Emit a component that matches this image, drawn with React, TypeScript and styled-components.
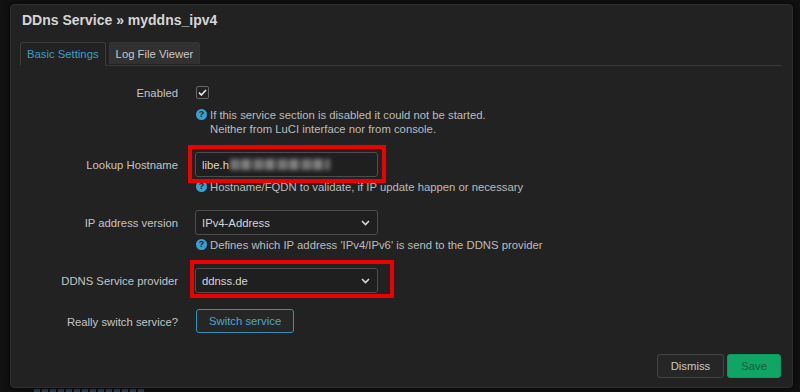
import styled, { createGlobalStyle } from 'styled-components';

const GlobalStyle = createGlobalStyle`
    html, body {
        margin: 0;
        padding: 0;
        background: #111111;
        font-family: 'Liberation Sans', Arial, sans-serif;
    }
`;

const Page = styled.div`
    width: 800px;
    height: 392px;
    padding: 4px 0 0 10px;
    box-sizing: border-box;
    overflow: hidden;
    position: relative;
`;

// faint content of the page behind the dialog
const BehindStrip = styled.div`
    position: absolute;
    left: 34px;
    bottom: 0;
    width: 112px;
    height: 3px;
    background: repeating-linear-gradient(90deg, #28445e 0 6px, transparent 6px 8px);
`;

const Modal = styled.div`
    position: relative;
    width: 783px;
    height: 384px;
    box-sizing: border-box;
    background: #222222;
    border: 1px solid #2e2e2e;
    border-radius: 4px;
    box-shadow: 0 0 6px rgba(0, 0, 0, 0.8);
    padding: 5px 11px 9px 9px;
    display: flex;
    flex-direction: column;
`;

const Title = styled.h2`
    margin: 0 0 0 2px;
    font-size: 14px;
    line-height: 20px;
    font-weight: bold;
    color: #d6d6d6;
`;

const TabBar = styled.div`
    display: flex;
    gap: 3px;
    margin-top: 12px;
    border-bottom: 1px solid #3a3a3a;
`;

const Tab = styled.div<{ $active?: boolean }>`
    height: 21px;
    padding: 0 6px;
    display: flex;
    align-items: center;
    font-size: 11.3px;
    border: 1px solid ${p => (p.$active ? '#3c3c3c' : '#353535')};
    border-bottom: none;
    border-radius: 3px 3px 0 0;
    color: ${p => (p.$active ? '#3d9ec8' : '#c8c8c8')};
    background: ${p => (p.$active ? '#222222' : '#313131')};
    margin-bottom: -1px;
    ${p => p.$active && 'padding-bottom: 1px; border-bottom: 1px solid #222;'}
`;

const Form = styled.div`
    display: grid;
    grid-template-columns: 158px 1fr;
    column-gap: 17px;
    row-gap: 16px;
    padding-top: 14px;
`;

const Label = styled.div`
    height: 25px;
    display: flex;
    align-items: center;
    justify-content: flex-end;
    font-size: 11.3px;
    color: #c4c4c4;
    align-self: start;
`;

const Field = styled.div`
    display: flex;
    flex-direction: column;
    align-items: flex-start;
`;

const Control = styled.div`
    height: 25px;
    display: flex;
    align-items: center;
    position: relative;
`;

const Checkbox = styled.span`
    width: 11px;
    height: 11px;
    margin-left: 1px;
    border: 1px solid #666;
    border-radius: 2px;
    display: flex;
    align-items: center;
    justify-content: center;
`;

const Input = styled.div`
    width: 183px;
    height: 25px;
    box-sizing: border-box;
    border: 1px solid #4d4d4d;
    border-radius: 3px;
    background: #1f1f1f;
    color: #d6d6d6;
    font-size: 11.3px;
    padding: 0 7px 0 6px;
    display: flex;
    align-items: center;
    justify-content: space-between;
`;

const Blurred = styled.span`
    display: inline-block;
    vertical-align: -1px;
    width: 100px;
    height: 11px;
    margin-left: 1px;
    background: repeating-linear-gradient(90deg, #8a8a8a 0 9px, #5a5a5a 9px 12px, #9a9a9a 12px 20px, #4a4a4a 20px 24px);
    filter: blur(2px);
    opacity: 0.8;
`;

const Mark = styled.div<{ $t: number; $r: number; $b: number; $l: number }>`
    position: absolute;
    top: ${p => -p.$t}px;
    right: ${p => -p.$r}px;
    bottom: ${p => -p.$b}px;
    left: ${p => -p.$l}px;
    border: 4px solid #ee0000;
    pointer-events: none;
`;

const Help = styled.div`
    margin-top: 3px;
    font-size: 11.3px;
    line-height: 14px;
    color: #bcbcbc;
    display: flex;
    gap: 3px;
`;

const HelpIcon = styled.span`
    width: 11px;
    height: 11px;
    margin-top: 1px;
    margin-left: 1px;
    flex: none;
    border-radius: 50%;
    background: #3aa0d3;
    color: #1c1c1c;
    font-size: 9px;
    font-weight: bold;
    line-height: 11px;
    text-align: center;
`;

const OutlineButton = styled.button`
    height: 24px;
    padding: 0 12px;
    margin-left: 1px;
    margin-top: -2px;
    border: 1px solid #3a8fb7;
    border-radius: 3px;
    background: #262626;
    color: #4aa6cf;
    font-family: inherit;
    font-size: 11.3px;
`;

const Footer = styled.div`
    margin-top: auto;
    display: flex;
    justify-content: flex-end;
    gap: 3px;
`;

const FooterButton = styled.button<{ $primary?: boolean }>`
    height: 24px;
    padding: 0 13px;
    border-radius: 3px;
    font-family: inherit;
    font-size: 11.3px;
    border: 1px solid ${p => (p.$primary ? '#0d9a5c' : '#444')};
    background: ${p => (p.$primary ? '#0fa565' : '#262626')};
    color: ${p => (p.$primary ? '#1d5a3b' : '#c8c8c8')};
`;

function Chevron() {
    return (
        <svg width="9" height="6" viewBox="0 0 9 6">
            <path d="M1 1 L4.5 4.5 L8 1" fill="none" stroke="#d8d8d8" strokeWidth="1.6" />
        </svg>
    );
}

function HelpLine({ children }: { children: React.ReactNode }) {
    return (
        <Help>
            <HelpIcon>?</HelpIcon>
            <span>{children}</span>
        </Help>
    );
}

export default function App() {
    return (
        <Page>
            <GlobalStyle />
            <BehindStrip />
            <Modal>
                <Title>DDns Service » myddns_ipv4</Title>

                <TabBar>
                    <Tab $active>Basic Settings</Tab>
                    <Tab>Log File Viewer</Tab>
                </TabBar>

                <Form>
                    <Label>Enabled</Label>
                    <Field>
                        <Control>
                            <Checkbox>
                                <svg width="9" height="7" viewBox="0 0 9 7">
                                    <path d="M1 3.6 L3.4 6 L8 1" fill="none" stroke="#f0f0f0" strokeWidth="1.5" />
                                </svg>
                            </Checkbox>
                        </Control>
                        <HelpLine>
                            If this service section is disabled it could not be started.
                            <br />
                            Neither from LuCI interface nor from console.
                        </HelpLine>
                    </Field>

                    <Label>Lookup Hostname</Label>
                    <Field>
                        <Control>
                            <Input>
                                <span>libe.h<Blurred /></span>
                            </Input>
                            <Mark $t={7} $r={8} $b={6} $l={7} />
                        </Control>
                        <HelpLine>Hostname/FQDN to validate, if IP update happen or necessary</HelpLine>
                    </Field>

                    <Label>IP address version</Label>
                    <Field>
                        <Control>
                            <Input>
                                <span>IPv4-Address</span>
                                <Chevron />
                            </Input>
                        </Control>
                        <HelpLine>Defines which IP address 'IPv4/IPv6' is send to the DDNS provider</HelpLine>
                    </Field>

                    <Label>DDNS Service provider</Label>
                    <Field>
                        <Control>
                            <Input>
                                <span>ddnss.de</span>
                                <Chevron />
                            </Input>
                            <Mark $t={8} $r={16} $b={5} $l={5} />
                        </Control>
                    </Field>

                    <Label>Really switch service?</Label>
                    <Field>
                        <Control>
                            <OutlineButton>Switch service</OutlineButton>
                        </Control>
                    </Field>
                </Form>

                <Footer>
                    <FooterButton>Dismiss</FooterButton>
                    <FooterButton $primary>Save</FooterButton>
                </Footer>
            </Modal>
        </Page>
    );
}
